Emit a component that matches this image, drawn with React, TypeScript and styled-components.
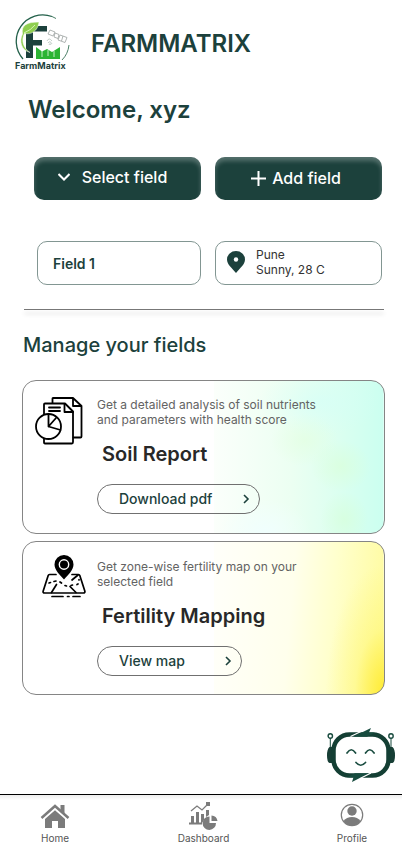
import React from "react";
import styled, { createGlobalStyle, css } from "styled-components";

const green = "#1c413c";

const GlobalStyle = createGlobalStyle`
  * { box-sizing: border-box; }
  body {
    margin: 0;
    background: #fff;
    font-family: Inter, "Open Sans", sans-serif;
    color: ${green};
  }
  h1, h2, h3, p { margin: 0; }
  button { font: inherit; cursor: pointer; }
`;

const Page = styled.div`
  display: flex;
  flex-direction: column;
  min-height: 100vh;
`;

const Header = styled.header`
  display: flex;
  align-items: center;
  gap: 19px;
  padding: 13px 14px 0;
`;

const Brand = styled.h1`
  padding-top: 3px;
  font-size: 24px;
  line-height: 30px;
  font-weight: 600;
`;

const Welcome = styled.h2`
  margin: 23px 28px 0;
  font-size: 24px;
  line-height: 32px;
  font-weight: 600;
`;

const Pair = styled.div<{ $top: number; $left: number }>`
  display: grid;
  grid-template-columns: 1fr 167px;
  gap: 14px;
  margin: ${(p) => p.$top}px 20px 0 ${(p) => p.$left}px;
`;

const ActionButton = styled.button<{ $gap: number }>`
  display: flex;
  align-items: center;
  justify-content: center;
  gap: ${(p) => p.$gap}px;
  height: 43px;
  padding: 0 10px 4px 0;
  border: 0;
  border-radius: 10px;
  background: ${green};
  color: #fff;
  font-size: 16px;
  font-weight: 500;
  box-shadow: inset 0 4px 4px rgba(255, 255, 255, 0.25);
`;

const AddButton = styled(ActionButton)`
  padding: 0 5px 2px 0;
`;

const InfoBox = styled.div`
  display: flex;
  align-items: center;
  gap: 11px;
  height: 44px;
  padding: 0 11px 2px;
  border: 1px solid #829692;
  border-radius: 10px;
`;

const FieldBox = styled(InfoBox)`
  padding: 0 15px;
  font-size: 14px;
  font-weight: 600;
`;

const Weather = styled.p`
  color: #333;
  font-size: 12px;
  line-height: 15px;
`;

const Divider = styled.hr`
  width: auto;
  height: 1px;
  margin: 24px 18px 0 24px;
  border: 0;
  background: #777;
  box-shadow: 0 4px 4px rgba(0, 0, 0, 0.2);
`;

const SectionTitle = styled.h2`
  margin: 21px 23px;
  font-size: 20px;
  line-height: 28px;
  font-weight: 500;
`;

const Cards = styled.main`
  display: flex;
  flex-direction: column;
  gap: 7px;
  margin: 0 17px 0 22px;
`;

const mint = css`
  background:
    radial-gradient(ellipse 30px 26px at 88% 56%, rgba(218, 255, 214, 0.6), transparent),
    radial-gradient(ellipse 34px 26px at 78% 39%, rgba(226, 255, 222, 0.6), transparent),
    radial-gradient(ellipse 24px 28px at 89% 91%, rgba(214, 255, 214, 0.6), transparent),
    radial-gradient(ellipse 60px 34px at 82% 14%, rgba(211, 255, 248, 0.6), transparent),
    radial-gradient(ellipse 46px 34px at 67% 100%, rgba(240, 255, 255, 0.9), transparent),
    linear-gradient(90deg, #fbfffb, #ecfff2 45%, #dcfff0 72%, #cbfff0) right / 47% 100% no-repeat,
    #fff;
`;

const lemon = css`
  background:
    radial-gradient(ellipse 58px 130px at 100% 100%, rgba(255, 234, 45, 0.95), rgba(255, 244, 90, 0.35) 50%, transparent),
    linear-gradient(95deg, #fffffa, #ffffec 45%, #ffffcd 68%, #fffb9c) right / 47% 100% no-repeat,
    #fff;
`;

const Card = styled.article<{ $tone: "mint" | "lemon" }>`
  display: grid;
  grid-template-columns: 74px 1fr;
  padding: ${(p) => (p.$tone === "mint" ? "16px 16px 19px 0" : "17px 16px 18px 0")};
  border: 1px solid #858585;
  border-radius: 14px;
  ${(p) => (p.$tone === "mint" ? mint : lemon)}
`;

const CardIcon = styled.div<{ $left: number }>`
  padding-left: ${(p) => p.$left}px;
  color: #000;
  svg { display: block; }
`;

const MapIconSlot = styled(CardIcon)`
  margin-top: -4px;
`;

const CardText = styled.p`
  max-width: 230px;
  color: #636363;
  font-size: 12px;
  line-height: 15px;
`;

const CardTitle = styled.h3`
  margin: 14px 0 17px 5px;
  color: #282828;
  font-size: 20px;
  line-height: 26px;
  font-weight: 600;
`;

const PillButton = styled.button<{ $width: number }>`
  display: flex;
  align-items: center;
  justify-content: space-between;
  width: ${(p) => p.$width}px;
  height: 30px;
  padding: 0 8px 1px 21px;
  border: 1px solid #707070;
  border-radius: 15px;
  background: transparent;
  color: ${green};
  font-size: 14px;
  font-weight: 500;
`;

const BotButton = styled.button`
  align-self: flex-end;
  width: 70px;
  height: 56px;
  margin: 33px 6px 9px 0;
  padding: 0;
  border: 0;
  background: none;
  svg { display: block; }
`;

const Nav = styled.nav`
  display: flex;
  justify-content: space-between;
  margin-top: auto;
  padding: 7px 30px 7px 35px;
  border-top: 1px solid #000;
  background: linear-gradient(#ededed, #fff 5px);
`;

const NavLink = styled.a`
  display: flex;
  flex-direction: column;
  align-items: center;
  gap: 1px;
  min-width: 40px;
  color: #555;
  font-size: 10px;
  line-height: 14px;
  text-decoration: none;
`;

const Logo = () => (
  <svg width="58" height="58" viewBox="0 0 58 58" role="img" aria-label="FarmMatrix logo">
    <path d="M9 46A26.500 26.500 0 0 1 38 3.500" fill="none" stroke="#23604a" strokeWidth="1.300" />
    <path d="M55 32q-1 9-7 15M38 3.500l4 2" fill="none" stroke="#4b8067" strokeWidth="1" />
    <path d="M12 13h21v5.500H19V27h9v5.500h-9V45h-7z" fill={green} />
    <path d="M8.500 21C7 12 13 9 25 9c-1 9-8 13-14.500 11.500C7 27 9 35 16 39.500 7 37 5 28 8.500 21z" fill="#8fce50" stroke="#fff" strokeWidth=".5" />
    <path d="M10 20q7-3 11-8" fill="none" stroke="#eaffcf" strokeWidth=".8" />
    <path d="M22 34l6 4.500 5-2.500 5 3 8-5v12H22z" fill="#2cb434" />
    <path d="M28 38v6M34 37v6M40 38v6" stroke="#e8ffe8" strokeWidth=".8" />
    <g fill="#fff" stroke="#9aa19f" strokeWidth=".8">
      <path d="M36 17l5 2-2 4-5-2zM46 22l7 2.500-2 5-7-2.500zM41 20l4 1.500-1 4-4-1.500z" />
      <path d="M49 23l-1.500 5" />
    </g>
    <path d="M33 28q2-4 5 0M34 30q2-3 4 1M35 32q1-3 2 0" fill="none" stroke="#b5c4bd" strokeWidth=".8" />
    <text x="1" y="56" fontFamily="Inter, sans-serif" fontSize="9" fontWeight="700" fill={green}>FarmMatrix</text>
  </svg>
);

const Chevron = () => (
  <svg width="10" height="10" viewBox="0 0 10 10" fill="none" stroke={green} strokeWidth="1.600">
    <path d="M3 1l4 4-4 4" />
  </svg>
);

const ReportIcon = () => (
  <svg width="48" height="48" viewBox="0 0 48 48" fill="none" stroke="#000" strokeWidth="1.800" strokeLinejoin="round" strokeLinecap="round">
    <path d="M17.500 6V1.500q0-.5.5-.5H38l8.500 8V39.500q0 1-1 1H38.500M38 1v8h8.500" />
    <path d="M9 17V7.500q0-1 1-1h20l8 8V45q0 1.500-1 1.500H10q-1 0-1-1V42" />
    <path d="M29.500 7v8H38M14 10.500h11M14 14h11" />
    <circle cx="13.500" cy="29.500" r="12.500" fill="#fff" />
    <path d="M13.500 17v12.500l7.500-8.500M13.500 29.500l12 3.500" />
  </svg>
);

const MapIcon = () => (
  <svg width="44" height="44" viewBox="0 0 44 44" fill="none" stroke="#000" strokeWidth="1.700" strokeLinecap="round" strokeLinejoin="round">
    <path d="M14 19.500H7.500q-1 0-1.300 1L1.200 36q-.6 2 1.500 2h38.600q2 0 1.500-2l-5-15.500q-.3-1-1.300-1H30" />
    <path d="M9.500 37.500l5-8M34 37.500l-6-6M30 25l6-5" />
    <path d="M7 28l1.500-.5M12 26.500l2-.5M18 27l1.500 1M23 30.500l1.500.5M29 30.500l1.500-.5M35 29.500l1-.5M37 25v-.5" />
    <path d="M10 41.500h11M25.500 41.500h1.500M31 41.500h7" />
    <path d="M22 24.500C18 20 12.500 15 12.500 9.500a9.500 9.500 0 0 1 19 0C31.500 15 26 20 22 24.500z" fill="#000" stroke="none" />
    <circle cx="22" cy="9.500" r="4.700" fill="#000" stroke="#fff" strokeWidth="1.400" />
  </svg>
);

const BotIcon = () => (
  <svg width="70" height="56" viewBox="-1 0 70 56">
    <g fill="none" stroke="#184b3e" strokeWidth="1.400">
      <circle cx="3.300" cy="8" r="2.200" />
      <circle cx="64" cy="8" r="2.200" />
      <path d="M3.300 10.500V21M64 10.500V21" strokeWidth="1" />
    </g>
    <path d="M6 19H2.500Q0 21 0 27.500T2.500 35H6zM62 19h3.500Q68 21 68 27.500T65.500 35H62z" fill="#173e35" />
    <rect x="6.500" y="6.500" width="55" height="41" rx="16" fill="#fff" stroke="#143f34" strokeWidth="4.500" />
    <path d="M26 8.800L44 0l-2 4.600h6l-8 4.200z" fill="#174c3f" />
    <path d="M42 45.200L25 54l1.500-4.800H20l8-4z" fill="#174c3f" />
    <path d="M23.500 8.500L34 3.500M33 50.500l11-5.500" stroke="#fff" strokeWidth="1.300" />
    <path d="M20 25q4.300-6.500 8.600 0M38.500 25q4.300-6.500 8.600 0M29 34.500q4.700 5.500 9.500 0" fill="none" stroke="#1b4d41" strokeWidth="1.700" strokeLinecap="round" />
  </svg>
);

const HomeIcon = () => (
  <svg width="30" height="28" viewBox="0 0 30 28" fill="#7b7b7b">
    <path d="M1.500 16L15 4l13.500 12" fill="none" stroke="#7b7b7b" strokeWidth="2.500" />
    <path d="M20.500 3h4v9l-4-4zM5 17L15 8.200 25 17v9h-7v-7h-6v7H5z" />
  </svg>
);

const DashboardIcon = () => (
  <svg width="32" height="28" viewBox="0 0 32 28" fill="#7b7b7b">
    <path d="M2 20.500h13v2H2zM4 14h3v7H4zM9 10h3v11H9zM14 12h3v6l-2 3h-1zM19 8h3v5l-3 2z" />
    <path d="M4 9l6-5 5 4 6-6" fill="none" stroke="#7b7b7b" strokeWidth="1.300" />
    <path d="M19 0h4v4h-4zM22.500 14.500v6.500H29a6.700 6.700 0 1 1-6.500-6.500z" />
    <path d="M24.500 13.500a6.500 6.500 0 0 1 6 5.500h-6z" />
  </svg>
);

const ProfileIcon = () => (
  <svg width="24" height="28" viewBox="0 0 24 28" fill="#7b7b7b">
    <circle cx="12" cy="13" r="10.700" fill="none" stroke="#7b7b7b" strokeWidth="1.200" />
    <circle cx="12" cy="9" r="4.700" />
    <path d="M3.500 19q3-4 8.500-4t8.500 4q-3 4.500-8.500 4.500T3.500 19z" />
  </svg>
);

export default function App() {
  return (
    <>
      <GlobalStyle />
      <Page>
        <Header>
          <Logo />
          <Brand>FARMMATRIX</Brand>
        </Header>
        <Welcome>Welcome, xyz</Welcome>
        <Pair $top={31} $left={34}>
          <ActionButton $gap={12}>
            <svg width="12" height="8" viewBox="0 0 12 8" fill="none" stroke="#fff" strokeWidth="2">
              <path d="M0.500 1L6 6.500 11.500 1" />
            </svg>
            Select field
          </ActionButton>
          <AddButton $gap={6}>
            <svg width="15" height="16" viewBox="0 0 15 16" stroke="#fff" strokeWidth="2">
              <path d="M7.500 1v15M0 8.500h15" />
            </svg>
            Add field
          </AddButton>
        </Pair>
        <Pair $top={41} $left={37}>
          <FieldBox>Field 1</FieldBox>
          <InfoBox>
            <svg width="18" height="22" viewBox="0 0 18 22">
              <path d="M9 22C5 17 0 13.500 0 8.500a9 8.500 0 0 1 18 0C18 13.500 13 17 9 22z" fill={green} />
              <circle cx="9" cy="8.500" r="2.200" fill="#fff" />
            </svg>
            <Weather>
              Pune
              <br />
              Sunny, 28 C
            </Weather>
          </InfoBox>
        </Pair>
        <Divider />
        <SectionTitle>Manage your fields</SectionTitle>
        <Cards>
          <Card $tone="mint">
            <CardIcon $left={12}>
              <ReportIcon />
            </CardIcon>
            <div>
              <CardText>Get a detailed analysis of soil nutrients and parameters with health score</CardText>
              <CardTitle>Soil Report</CardTitle>
              <PillButton $width={163}>
                Download pdf
                <Chevron />
              </PillButton>
            </div>
          </Card>
          <Card $tone="lemon">
            <MapIconSlot $left={19}>
              <MapIcon />
            </MapIconSlot>
            <div>
              <CardText>Get zone-wise fertility map on your selected field</CardText>
              <CardTitle>Fertility Mapping</CardTitle>
              <PillButton $width={145}>
                View map
                <Chevron />
              </PillButton>
            </div>
          </Card>
        </Cards>
        <BotButton aria-label="Open assistant">
          <BotIcon />
        </BotButton>
        <Nav>
          <NavLink href="#home">
            <HomeIcon />
            Home
          </NavLink>
          <NavLink href="#dashboard">
            <DashboardIcon />
            Dashboard
          </NavLink>
          <NavLink href="#profile">
            <ProfileIcon />
            Profile
          </NavLink>
        </Nav>
      </Page>
    </>
  );
}
